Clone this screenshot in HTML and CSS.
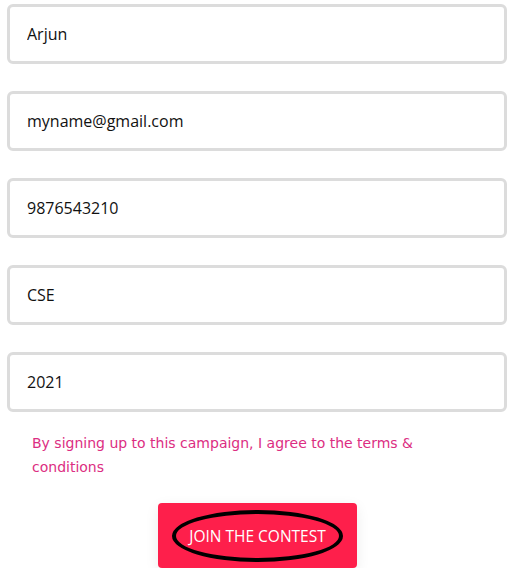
FILE: index.html
```html
<!DOCTYPE html>
<html>
<head>
    <title>Join the Contest</title>
    <link rel="stylesheet" href="styles.css">
</head>
<body>
    <form id="contestForm">
        <div class="form-group"><input type="text" value="Arjun"></div>
        <div class="form-group"><input type="email" value="myname@gmail.com"></div>
        <div class="form-group"><input type="text" value="9876543210"></div>
        <div class="form-group"><input type="text" value="CSE"></div>
        <div class="form-group"><input type="text" value="2021"></div>
        <p class="terms">By signing up to this campaign, I agree to the terms &amp; conditions</p>
        <div class="actions">
            <button type="submit"><span class="circled">JOIN THE CONTEST</span></button>
        </div>
    </form>
</body>
</html>
```

FILE: styles.css
```css
body {
    margin: 0;
    padding: 4px 7px 0;
    background: #fff;
    font-family: "Open Sans", "Noto Sans", sans-serif;
}
form {
    width: 500px;
}
.form-group {
    margin-bottom: 27px;
}
input {
    box-sizing: border-box;
    display: block;
    width: 100%;
    height: 60px;
    padding: 0 17px;
    border: 3px solid #dcdcdc;
    border-radius: 6px;
    font-family: "Open Sans", "Noto Sans", sans-serif;
    font-size: 16px;
    color: #111;
    outline: none;
}
.terms {
    margin: -8px 0 0;
    padding: 0 60px 0 25px;
    font-family: "DejaVu Sans", sans-serif;
    font-size: 14px;
    line-height: 24px;
    color: #dc2d82;
}
.actions {
    display: flex;
    justify-content: center;
    margin-top: 24px;
}
button {
    width: 199px;
    height: 65px;
    background-color: #fe1f4b;
    color: #fff;
    border: none;
    border-radius: 4px;
    box-shadow: 0 4px 14px rgba(0, 0, 0, 0.08);
    font-family: "Open Sans", "Noto Sans", sans-serif;
    font-size: 15.5px;
    cursor: pointer;
    margin-left: 1px;
}
.circled {
    display: inline-block;
    padding: 11px 13px;
    border: 4px solid #000;
    border-radius: 50%;
}
```
